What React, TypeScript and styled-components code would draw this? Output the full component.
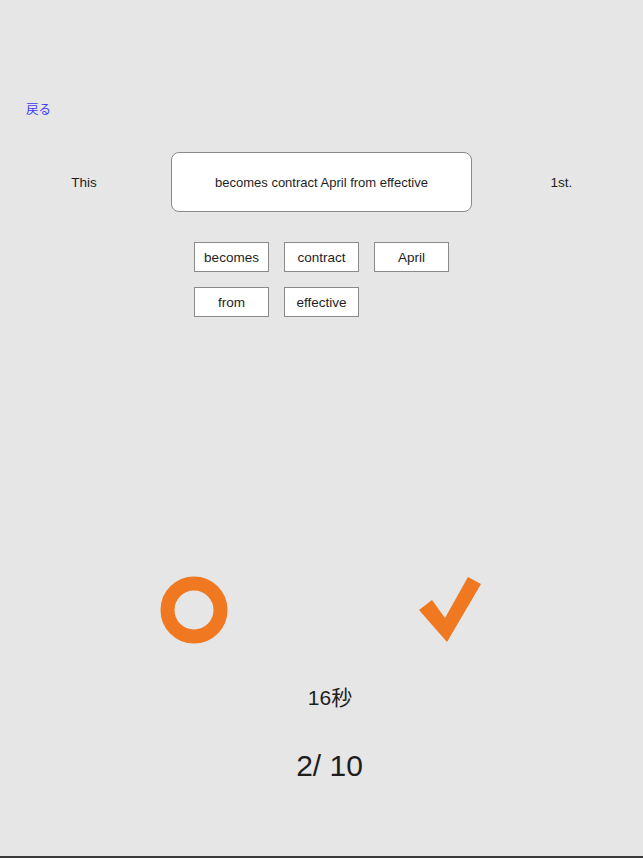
import React from "react";
import styled, { createGlobalStyle } from "styled-components";

const GlobalStyle = createGlobalStyle`
  html, body {
    margin: 0;
    padding: 0;
    background: #e6e6e6;
  }
  body {
    font-family: "Liberation Sans", "Noto Sans CJK JP", sans-serif;
  }
`;

const WORDS = ["becomes", "contract", "April", "from", "effective"];

const App = () => {
    return (
        <Page>
            <GlobalStyle />
            <BackLink>戻る</BackLink>
            <SentenceRow>
                <SideWord $align="left">This</SideWord>
                <AnswerBox>{WORDS.join(" ")}</AnswerBox>
                <SideWord $align="right">1st.</SideWord>
            </SentenceRow>
            <WordGrid>
                {WORDS.map((w) => (
                    <WordButton key={w}>{w}</WordButton>
                ))}
            </WordGrid>
            <MarkRow>
                <svg width="68" height="68" viewBox="0 0 68 68">
                    <circle cx="34" cy="34" r="26.5" fill="none" stroke="#f07820" strokeWidth="14" />
                </svg>
                <svg width="64" height="68" viewBox="0 0 64 68">
                    <polygon points="1,34 14,24 27,42 50,1 63,8 29,66" fill="#f07820" />
                </svg>
            </MarkRow>
            <Timer>16秒</Timer>
            <Counter>2/ 10</Counter>
        </Page>
    );
};

export default App;

const Page = styled.div`
    position: relative;
    width: 643px;
    height: 858px;
    box-sizing: border-box;
    padding-top: 101px;
    background: #e6e6e6;
    border-bottom: 2px solid #3a3a3a;
    display: flex;
    flex-direction: column;
    color: #1e1e1e;
`;

const BackLink = styled.div`
    margin-left: 26px;
    height: 18px;
    line-height: 18px;
    font-size: 12.5px;
    color: #3d3df2;
`;

const SentenceRow = styled.div`
    margin-top: 33px;
    display: grid;
    grid-template-columns: 171px 301px 1fr;
    align-items: center;
    height: 60px;
`;

const SideWord = styled.div<{ $align: "left" | "right" }>`
    text-align: center;
    font-size: 13.5px;
    padding-right: ${(p) => (p.$align === "left" ? "3px" : "0")};
    padding-left: ${(p) => (p.$align === "right" ? "8px" : "0")};
`;

const AnswerBox = styled.div`
    box-sizing: border-box;
    height: 60px;
    display: flex;
    align-items: center;
    justify-content: center;
    background: #ffffff;
    border: 1px solid #8a8a8a;
    border-radius: 8px;
    font-size: 13px;
`;

const WordGrid = styled.div`
    margin-top: 30px;
    margin-left: 194px;
    display: grid;
    grid-template-columns: repeat(3, 75px);
    grid-auto-rows: 30px;
    column-gap: 15px;
    row-gap: 15px;
`;

const WordButton = styled.div`
    box-sizing: border-box;
    display: flex;
    align-items: center;
    justify-content: center;
    background: #ffffff;
    border: 1px solid #8a8a8a;
    font-size: 13.5px;
`;

const MarkRow = styled.div`
    margin-top: 259px;
    padding-left: 160px;
    display: flex;
    align-items: center;
    gap: 190px;
    height: 68px;
`;

const Timer = styled.div`
    margin-top: 40px;
    text-align: center;
    padding-left: 17px;
    font-size: 21px;
    line-height: 28px;
`;

const Counter = styled.div`
    margin-top: 34px;
    text-align: center;
    padding-left: 16px;
    font-size: 30px;
    line-height: 40px;
`;
